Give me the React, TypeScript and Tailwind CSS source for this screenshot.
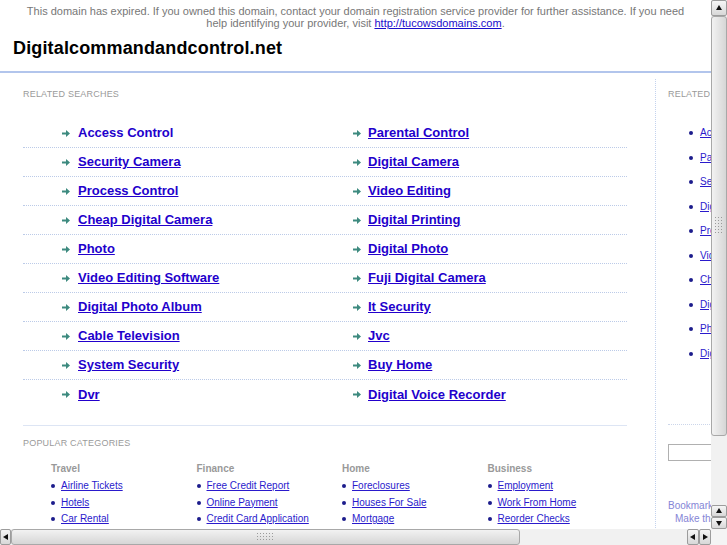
import React from "react";

const related = [
  ["Access Control", "Parental Control"],
  ["Security Camera", "Digital Camera"],
  ["Process Control", "Video Editing"],
  ["Cheap Digital Camera", "Digital Printing"],
  ["Photo", "Digital Photo"],
  ["Video Editing Software", "Fuji Digital Camera"],
  ["Digital Photo Album", "It Security"],
  ["Cable Television", "Jvc"],
  ["System Security", "Buy Home"],
  ["Dvr", "Digital Voice Recorder"],
];

const sidebar = [
  "Access Control",
  "Parental Control",
  "Security Camera",
  "Digital Camera",
  "Process Control",
  "Video Editing",
  "Cheap Digital Camera",
  "Digital Printing",
  "Photo",
  "Digital Photo",
];

const categories = [
  { name: "Travel", items: ["Airline Tickets", "Hotels", "Car Rental"] },
  { name: "Finance", items: ["Free Credit Report", "Online Payment", "Credit Card Application"] },
  { name: "Home", items: ["Foreclosures", "Houses For Sale", "Mortgage"] },
  { name: "Business", items: ["Employment", "Work From Home", "Reorder Checks"] },
];

function Arrow() {
  return (
    <svg width="8" height="7" viewBox="0 0 8 7" className="shrink-0">
      <path d="M0 2.5h4V0l4 3.5L4 7V4.5H0z" fill="#3d8a7f" />
    </svg>
  );
}

function Bullet() {
  return <span className="inline-block h-[4px] w-[4px] shrink-0 rounded-full bg-[#1c1c8c]" />;
}

// triangle glyph for the fake scrollbar buttons
function Tri({ dir }: { dir: "up" | "down" | "left" | "right" }) {
  const pts = {
    up: "4,1 7,6 1,6",
    down: "1,2 7,2 4,7",
    left: "6,1 6,7 1,4",
    right: "2,1 2,7 7,4",
  }[dir];
  return (
    <svg width="8" height="8" viewBox="0 0 8 8">
      <polygon points={pts} fill="#111" />
    </svg>
  );
}

function Grip({ vertical }: { vertical?: boolean }) {
  const dots = [];
  const cols = vertical ? 3 : 6;
  const rows = vertical ? 6 : 3;
  for (let r = 0; r < rows; r++)
    for (let c = 0; c < cols; c++)
      dots.push(<rect key={`${r}-${c}`} x={c * 3} y={r * 3} width="1" height="1" fill="#9a9a9a" />);
  return (
    <svg width={cols * 3} height={rows * 3}>
      {dots}
    </svg>
  );
}

const btn =
  "flex items-center justify-center border border-[#9c9c9c] bg-gradient-to-b from-[#f6f6f6] to-[#d8d8d8] rounded-[2px]";

export default function App() {
  return (
    <div className="flex h-[545px] w-[727px] flex-col overflow-hidden bg-white font-['Liberation_Sans',Arial,sans-serif]">
      <div className="flex h-[529px]">
        {/* page viewport */}
        <div className="w-[711px] shrink-0 overflow-hidden">
          <p className="px-[18px] pt-[5px] text-center text-[11px] leading-[12px] text-[#777]">
            This domain has expired. If you owned this domain, contact your domain registration service provider for
            further assistance. If you need help identifying your provider, visit{" "}
            <a href="#" className="text-[#1a0dcc] underline">
              http://tucowsdomains.com
            </a>
            .
          </p>
          <h1 className="ml-[13px] mt-[8px] text-[18px] font-bold leading-[22px] tracking-[0.15px] text-black">
            Digitalcommandandcontrol.net
          </h1>
          <div className="mt-[12px] h-[2px] w-[711px] bg-[#b2c5ec]" />

          <div className="mt-[6px] flex w-[900px]">
            {/* main column */}
            <div className="w-[656px] shrink-0 border-r border-dotted border-[#c3d2ee]">
              <div className="pl-[23px] pt-[10px] text-[9px] leading-[11px] tracking-[0.2px] text-[#9a9a9a]">
                RELATED SEARCHES
              </div>
              <div className="ml-[23px] mt-[19px] w-[604px]">
                {related.map(([a, b], i) => (
                  <div
                    key={a}
                    className={`grid h-[29px] grid-cols-[291px_1fr] items-center ${
                      i < related.length - 1 ? "border-b border-dotted border-[#bccbe8]" : ""
                    }`}
                  >
                    <div className="flex items-center gap-[8px] pl-[39px]">
                      <Arrow />
                      <a
                        href="#"
                        className={`text-[13px] font-bold leading-[16px] text-[#2200cc] ${i === 0 ? "" : "underline"}`}
                      >
                        {a}
                      </a>
                    </div>
                    <div className="flex items-center gap-[7px] pl-[39px]">
                      <Arrow />
                      <a href="#" className="text-[13px] font-bold leading-[16px] text-[#2200cc] underline">
                        {b}
                      </a>
                    </div>
                  </div>
                ))}
              </div>

              <div className="ml-[23px] mt-[16px] w-[604px] border-t border-[#dde5f4] pt-[12px] text-[9px] leading-[11px] tracking-[0.2px] text-[#9a9a9a]">
                POPULAR CATEGORIES
              </div>
              <div className="ml-[51px] mt-[14px] grid w-[582px] grid-cols-4">
                {categories.map((c) => (
                  <div key={c.name}>
                    <div className="text-[10px] font-bold leading-[12px] text-[#999]">{c.name}</div>
                    <ul className="mt-[3px]">
                      {c.items.map((it) => (
                        <li key={it} className="flex h-[16.5px] items-center gap-[6px]">
                          <Bullet />
                          <a href="#" className="text-[10px] leading-[12px] text-[#2a1acc] underline">
                            {it}
                          </a>
                        </li>
                      ))}
                    </ul>
                  </div>
                ))}
              </div>
            </div>

            {/* right sidebar */}
            <div className="w-[200px] shrink-0 pl-[12px]">
              <div className="pt-[10px] text-[9px] leading-[11px] tracking-[0.2px] text-[#9a9a9a]">
                RELATED SEARCHES
              </div>
              <ul className="ml-[21px] mt-[20.75px]">
                {sidebar.map((s) => (
                  <li key={s} className="flex h-[24.56px] items-center gap-[7px]">
                    <Bullet />
                    <a href="#" className="text-[10px] leading-[12px] text-[#2a1acc] underline">
                      {s}
                    </a>
                  </li>
                ))}
              </ul>
              <div className="mt-[58px] w-[180px] border-t border-dotted border-[#ccd6ea]" />
              <div className="mt-[19px] h-[17px] w-[150px] border border-[#b0b0b0] bg-white" />
              <div className="mt-[38px] text-[10px] leading-[13px] text-[#8585d6]">Bookmark this page</div>
              <div className="pl-[7px] text-[10px] leading-[13px] text-[#8585d6]">Make this your homepage</div>
            </div>
          </div>
        </div>

        {/* vertical scrollbar */}
        <div className="flex w-[16px] shrink-0 flex-col bg-[#efefef]">
          <div className={`${btn} h-[16px]`}>
            <Tri dir="up" />
          </div>
          <div className="flex h-[420px] items-center justify-center rounded-[3px] border border-[#a8a8a8] bg-gradient-to-r from-[#f2f2f2] to-[#d6d6d6]">
            <Grip vertical />
          </div>
          <div className="flex-1 bg-[#f1f1f1]" />
          <div className={`${btn} h-[12px]`}>
            <Tri dir="up" />
          </div>
          <div className={`${btn} h-[12px]`}>
            <Tri dir="down" />
          </div>
        </div>
      </div>

      {/* horizontal scrollbar */}
      <div className="flex h-[16px]">
        <div className="flex w-[711px] shrink-0 bg-[#f1f1f1]">
          <div className={`${btn} w-[11px]`}>
            <Tri dir="left" />
          </div>
          <div className="flex w-[509px] items-center justify-center rounded-[3px] border border-[#a8a8a8] bg-gradient-to-b from-[#f2f2f2] to-[#d6d6d6]">
            <Grip />
          </div>
          <div className="flex-1" />
          <div className={`${btn} w-[12px]`}>
            <Tri dir="left" />
          </div>
          <div className={`${btn} w-[12px]`}>
            <Tri dir="right" />
          </div>
        </div>
        <div className="w-[16px] bg-[#f4f4f4]" />
      </div>
    </div>
  );
}
